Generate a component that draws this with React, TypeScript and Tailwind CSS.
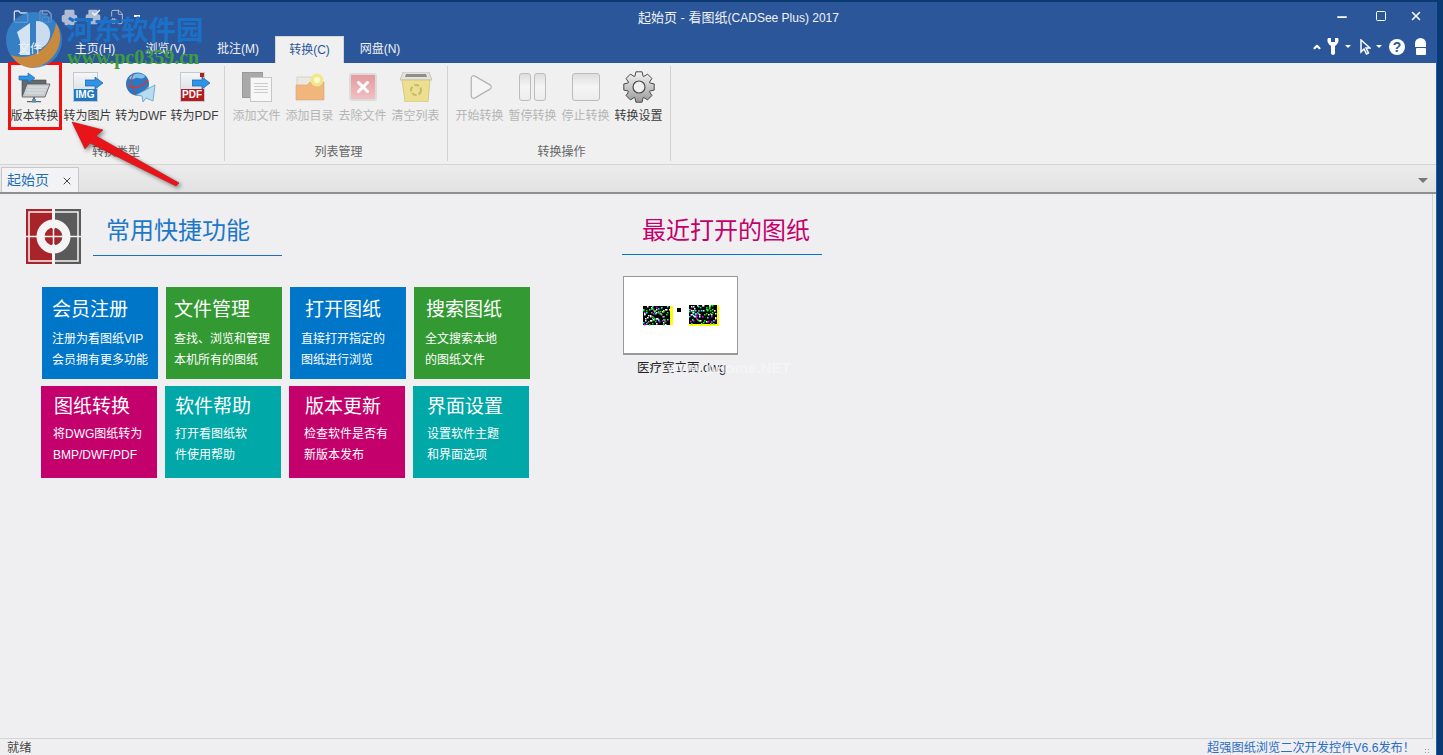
import { Folder, Save, Printer, FileCog, Check, ChevronUp, Minus, Square, X, Play } from 'lucide-react'

const cjk = "font-['Liberation_Sans','Noto_Sans_CJK_SC',sans-serif]"

function FolderIcon() {
  return (
    <svg viewBox="0 0 34 36" className="w-[34px] h-[36px]">
      <path d="M4 27V9h9l2 2h13v14z" fill="#646a6e" stroke="#444" strokeWidth="0.6" />
      <path d="M4 28 9 15h23l-5 13z" fill="#c6ccd0" stroke="#555" strokeWidth="0.8" />
      <path d="M10 18h20M9 21h19M8 24h18" stroke="#e8ecee" strokeWidth="0.8" />
      <path d="M1 7h9V4l7 5-7 5v-3H1z" fill="#2f93e6" stroke="#1b5fa8" strokeWidth="0.6" />
      <path d="M15 28h2v3h-2zM9 32h14v1.200H9z" fill="#666" />
      <rect x="14" y="30" width="4" height="3.500" fill="#5c8fb0" />
    </svg>
  )
}

function DocArrowIcon({ label, color, fold }: { label: string; color: string; fold?: boolean }) {
  return (
    <div className="relative w-[30px] h-[30px]">
      <div className="w-[25px] h-[30px] flex flex-col justify-end bg-gradient-to-b from-[#f4f6f8] to-[#cfd6dc] border border-[#c5c9cc]">
        <div className={`h-[12px] ${color} text-white text-[10px] leading-[12px] font-bold text-center font-['Liberation_Sans',sans-serif]`}>
          {label}
        </div>
      </div>
      {fold && <div className="absolute top-[1px] left-[20px] w-[4px] h-[4px] bg-[#b31d20]" />}
      <svg viewBox="0 0 18 12" className="absolute top-[5px] left-[12px] w-[18px] h-[12px]">
        <path d="M0 3h10V0l8 6-8 6V9H0z" fill="#2f93e6" stroke="#1b5fa8" strokeWidth="0.7" />
      </svg>
    </div>
  )
}

function GlobeIcon() {
  return (
    <svg viewBox="0 0 30 30" className="w-[30px] h-[30px]">
      <circle cx="11.500" cy="12" r="11.500" fill="#2a78c4" />
      <path d="M3 6c4-5 12-6 16-2-1 3-4 3-7 2S6 10 3 6z" fill="#7fc0ea" />
      <path d="M1 13c6 4 14 3 21-5" stroke="#d8392b" strokeWidth="1.300" fill="none" />
      <path d="M7 3c-3 6-2 14 4 20" stroke="#d8392b" strokeWidth="1" fill="none" />
      <path d="M14 21c3-2 6-3 8-7-1 5-4 8-8 9z" fill="#e0a63a" />
      <path d="M29 13 10 23l6 1 1 6 3-4 7 3z" fill="#b7dcf2" stroke="#4f93c4" strokeWidth="0.7" />
    </svg>
  )
}

function CopyIcon() {
  return (
    <div className="relative w-[30px] h-[30px]">
      <div className="absolute top-0 left-0 w-[21px] h-[26px] bg-[#a9a9a9] border border-[#999]" />
      <div className="absolute top-[5px] left-[8px] w-[22px] h-[25px] bg-[#f7f7f7] border border-[#c6c6c6] flex flex-col gap-[2px] px-[3px] pt-[5px]">
        <div className="h-px bg-[#ccc]" />
        <div className="h-px bg-[#ccc]" />
        <div className="h-px bg-[#ccc]" />
        <div className="h-px bg-[#ccc]" />
      </div>
    </div>
  )
}

function NewFolderIcon() {
  return (
    <svg viewBox="0 0 30 28" className="w-[30px] h-[28px]">
      <path d="M2 4h17v10H2z" fill="#ece8df" stroke="#c8c2b8" strokeWidth="0.6" />
      <path d="M1 12h11l3-3h14v18H1z" fill="#f2b67c" stroke="#c9a783" strokeWidth="0.6" />
      <circle cx="22" cy="7" r="6.500" fill="#f0e98c" />
      <circle cx="22" cy="7" r="3" fill="#fbf8d4" />
    </svg>
  )
}

function DeleteIcon() {
  return (
    <div className="w-[28px] h-[28px] rounded-[3px] border-2 border-[#dcdcdc] bg-gradient-to-b from-[#e59a9f] to-[#efc0c3] flex items-center justify-center">
      <X size={18} strokeWidth={4} className="text-white" />
    </div>
  )
}

function RecycleIcon() {
  return (
    <svg viewBox="0 0 32 30" className="w-[32px] h-[30px]">
      <path d="M3 0h26l3 8H0z" fill="#e3e3dc" stroke="#b7b7b0" strokeWidth="0.7" />
      <path d="M6 2h20l1 3H5z" fill="#8f8f88" />
      <path d="M2 8h28l-2 22H5z" fill="#ecdf90" stroke="#c8bd78" strokeWidth="0.7" />
      <circle cx="16" cy="18" r="5" fill="none" stroke="#c5b871" strokeWidth="2" strokeDasharray="5 2" />
    </svg>
  )
}

function GearIcon() {
  // eight teeth, computed once
  let d = ''
  for (let i = 0; i < 8; i++) {
    const a = (i * Math.PI) / 4
    const pts = [
      [11.500, a - 0.36],
      [15.500, a - 0.2],
      [15.500, a + 0.2],
      [11.500, a + 0.36],
    ]
    for (const [r, t] of pts) {
      d += `${d ? 'L' : 'M'}${(16 + r * Math.cos(t)).toFixed(2)} ${(16 + r * Math.sin(t)).toFixed(2)} `
    }
  }
  return (
    <svg viewBox="0 0 32 32" className="w-[32px] h-[32px]">
      <defs>
        <linearGradient id="gear" x1="0" y1="0" x2="0" y2="1">
          <stop offset="0" stopColor="#f4f4f4" />
          <stop offset="1" stopColor="#9a9a9a" />
        </linearGradient>
      </defs>
      <path d={d + 'Z'} fill="url(#gear)" stroke="#4a4a4a" strokeWidth="1" strokeLinejoin="round" />
      <circle cx="16" cy="16" r="6" fill="#f0f0f0" stroke="#4a4a4a" strokeWidth="1.200" />
    </svg>
  )
}

function GreyBox({ className }: { className: string }) {
  return <div className={`rounded-[3px] border border-[#bcbcbc] bg-gradient-to-b from-[#dedede] via-[#f5f5f5] to-[#ececec] ${className}`} />
}

function StartLogo() {
  return (
    <svg viewBox="0 0 55 55" className="w-[55px] h-[55px] shrink-0">
      <rect x="0" y="0" width="26" height="55" fill="#a9242a" />
      <rect x="29" y="0" width="26" height="55" fill="#5a5a5a" />
      <path d="M3 3h49v49H3z" fill="none" stroke="#f4f4f4" strokeWidth="1.500" />
      <path d="M0 27.500h55M27.500 0v55" stroke="#f4f4f4" strokeWidth="1.500" />
      <circle cx="27.500" cy="27.500" r="13" fill="none" stroke="#f4f4f4" strokeWidth="8" />
      <circle cx="27.500" cy="27.500" r="8" fill="#a9242a" />
      <path d="M27.500 19v17M19 27.500h17" stroke="#f4f4f4" strokeWidth="1.500" />
    </svg>
  )
}

function Thumbnail() {
  const specks: { x: number; y: number; c: string }[] = []
  const colors = ['#00ff00', '#ff00ff', '#ffffff', '#00ffff', '#ffffff', '#00ff00']
  let seed = 7
  for (let i = 0; i < 170; i++) {
    seed = (seed * 137 + 59) % 1009
    const right = i % 2 === 0
    specks.push({
      x: (right ? 46 : 0) + (seed % 27),
      y: ((seed * 3) % 19) + (right ? 0 : 1),
      c: colors[seed % colors.length],
    })
  }
  return (
    <svg viewBox="0 0 76 21" className="w-[76px] h-[21px]">
      <rect x="0" y="1" width="27" height="19" fill="#000" />
      <rect x="27" y="1" width="3" height="19" fill="#ff0" />
      <rect x="34" y="3" width="4" height="4" fill="#000" />
      <rect x="46" y="0" width="28" height="19" fill="#000" />
      <rect x="46" y="19" width="30" height="2" fill="#ff0" />
      <rect x="74" y="0" width="2" height="19" fill="#ff0" />
      {specks.map((s, i) => (
        <rect key={i} x={s.x} y={s.y} width="1.500" height="1.500" fill={s.c} />
      ))}
    </svg>
  )
}

function RibbonButton({ label, icon, disabled, w = 'w-[53px]' }: { label: string; icon: React.ReactNode; disabled?: boolean; w?: string }) {
  return (
    <div className={`${w} flex flex-col items-center`}>
      <div className="h-[36px] flex items-center justify-center">{icon}</div>
      <span className={`mt-[3px] text-[12px] leading-[16px] whitespace-nowrap ${disabled ? 'text-[#b5b5b5]' : 'text-[#3c3c3c]'}`}>{label}</span>
    </div>
  )
}

function RibbonGroup({ title, children, className }: { title: string; children: React.ReactNode; className: string }) {
  return (
    <div className={`flex flex-col h-[95px] border-r border-[#d2d2d2] ${className}`}>
      <div className="flex flex-1 pt-[3px]">{children}</div>
      <div className="text-center text-[12px] leading-[16px] text-[#666] pb-[1px]">{title}</div>
    </div>
  )
}

type TileProps = {
  title: string
  lines: string[]
  color: string
  titleX: string
  descX: string
  lower?: boolean
}

function Tile({ title, lines, color, titleX, descX, lower }: TileProps) {
  return (
    <div className={`w-[116px] h-[92px] text-white ${color}`}>
      <div className={`text-[19px] leading-[24px] ${lower ? 'mt-[9px]' : 'mt-[11px]'} ${titleX}`}>{title}</div>
      <div className={`${lower ? 'mt-[5px]' : 'mt-[7px]'} text-[12px] leading-[21px] whitespace-nowrap ${descX}`}>
        {lines.map(l => <div key={l}>{l}</div>)}
      </div>
    </div>
  )
}

const tabs = [
  { label: '主页(H)', w: 'w-[70px]' },
  { label: '浏览(V)', w: 'w-[71px]' },
  { label: '批注(M)', w: 'w-[74px]' },
]

export default function App() {
  return (
    <div className={`${cjk} relative w-[1443px] h-[755px] overflow-hidden bg-[#0b3a72]`}>
      <div className="w-[1437px] h-[753px] mt-[2px] flex flex-col bg-[#efeff2] border-r border-[#1e5cb0]">
        {/* title bar */}
        <div className="h-[61px] shrink-0 flex flex-col bg-[#2b579a] text-white">
          <div className="h-[34px] flex">
            <div className="w-[638px] shrink-0 flex items-start pl-[13px] pt-[7px] text-[#ccd6e6]">
              <Folder size={16} strokeWidth={2} />
              <Save size={15} strokeWidth={2} className="ml-[9px] text-[#8ea3c6]" />
              <Printer size={17} strokeWidth={2} className="ml-[8px] fill-[#aebcd4] text-[#aebcd4]" />
              <div className="relative ml-[7px] w-[16px] h-[16px]">
                <Printer size={16} strokeWidth={2} className="fill-[#aebcd4] text-[#aebcd4]" />
                <Check size={10} strokeWidth={4} className="absolute -top-[1px] right-[0px] text-[#e8eef6]" />
              </div>
              <FileCog size={16} strokeWidth={1.500} className="ml-[8px] text-[#aebcd4]" />
              <div className="ml-[9px] mt-[6px] w-[6px] h-[2px] bg-white" />
            </div>
            <div className="pt-[8px] text-[13px] leading-[16px] text-[#f2f2f2] whitespace-nowrap">
              起始页 - 看图纸<span className="text-[12px]">(CADSee Plus) 2017</span>
            </div>
            <div className="ml-auto flex items-start pt-[7px] pr-[13px]">
              <Minus size={14} strokeWidth={3} className="mt-[1px]" />
              <Square size={12} strokeWidth={2} className="ml-[26px] mt-[1px]" />
              <X size={14} strokeWidth={2.500} className="ml-[22px]" />
            </div>
          </div>
          <div className="h-[27px] flex items-end">
            <div className="relative z-10 w-[60px] h-[27px] text-center text-[12px] leading-[26px] text-[#f0f0f0]">文件</div>
            {tabs.map(t => (
              <div key={t.label} className={`${t.w} h-[27px] text-center text-[12px] leading-[26px] text-[#f0f0f0]`}>{t.label}</div>
            ))}
            <div className="w-[69px] h-[27px] bg-[#f0f0f0] text-center text-[12px] leading-[26px] text-[#2b579a] border-x border-t border-[#d5d5d5]">转换(C)</div>
            <div className="w-[72px] h-[27px] text-center text-[12px] leading-[26px] text-[#f0f0f0]">网盘(N)</div>
            <div className="ml-auto self-stretch flex items-center pr-[10px] pb-[6px]">
              <ChevronUp size={10} strokeWidth={5} />
              <svg viewBox="0 0 12 17" className="ml-[5px] w-[12px] h-[17px]">
                <path d="M1 0C0 2 0 5 4 8v7c0 1 1 2 2 2s2-1 2-2V8c4-3 4-6 3-8L8 0v4H4V0z" fill="#fff" />
              </svg>
              <div className="ml-[6px] border-x-[3px] border-t-[3px] border-x-transparent border-t-white" />
              <svg viewBox="0 0 11 16" className="ml-[9px] w-[11px] h-[16px]">
                <path d="M1 1v12l3-3 2.500 5 2-1-2.500-5h4z" fill="#2b579a" stroke="#fff" strokeWidth="1.500" />
              </svg>
              <div className="ml-[5px] border-x-[3px] border-t-[3px] border-x-transparent border-t-white" />
              <div className="ml-[7px] w-[16px] h-[16px] rounded-full bg-white text-[#2b579a] text-[14px] leading-[16px] font-bold text-center">?</div>
              <div className="ml-[10px] w-[11px] flex flex-col items-center">
                <div className="w-[11px] h-[9px] rounded-t-full bg-white" />
                <div className="w-[9px] h-[1px]" />
                <div className="w-[10px] h-[7px] bg-white rounded-[1px]" />
              </div>
            </div>
          </div>
        </div>

        {/* ribbon */}
        <div className="flex h-[102px] shrink-0 bg-[#f0f0f0] border-b border-[#d4d4d4] pl-[8px] pt-[3px]">
          <RibbonGroup title="转换类型" className="w-[217px]">
            <RibbonButton label="版本转换" icon={<FolderIcon />} />
            <RibbonButton label="转为图片" icon={<DocArrowIcon label="IMG" color="bg-[#1c78c2]" />} />
            <RibbonButton label="转为DWF" icon={<GlobeIcon />} w="w-[54px]" />
            <RibbonButton label="转为PDF" icon={<DocArrowIcon label="PDF" color="bg-[#b31d20]" fold />} />
          </RibbonGroup>
          <RibbonGroup title="列表管理" className="w-[223px] pl-[5px]">
            <RibbonButton label="添加文件" disabled icon={<CopyIcon />} />
            <RibbonButton label="添加目录" disabled icon={<NewFolderIcon />} />
            <RibbonButton label="去除文件" disabled icon={<DeleteIcon />} />
            <RibbonButton label="清空列表" disabled icon={<RecycleIcon />} />
          </RibbonGroup>
          <RibbonGroup title="转换操作" className="w-[223px] pl-[5px]">
            <RibbonButton label="开始转换" disabled icon={<Play size={30} strokeWidth={1} className="text-[#b4b4b4] fill-[#f4f4f4]" />} />
            <RibbonButton label="暂停转换" disabled icon={<div className="flex gap-[3px]"><GreyBox className="w-[12px] h-[28px]" /><GreyBox className="w-[12px] h-[28px]" /></div>} />
            <RibbonButton label="停止转换" disabled icon={<GreyBox className="w-[28px] h-[28px]" />} />
            <RibbonButton label="转换设置" icon={<GearIcon />} />
          </RibbonGroup>
        </div>

        {/* doc tabs */}
        <div className="h-[29px] shrink-0 flex items-end justify-between bg-gradient-to-b from-[#ececec] to-[#e2e2e2] border-b-2 border-[#8f8f8f] pl-[1px]">
          <div className="w-[78px] h-[25px] bg-[#f3f3f5] border border-b-0 border-[#c8c8c8] flex items-center pl-[5px] pr-[5px] pt-[1px] justify-between">
            <span className="text-[14px] text-[#1f6fb8]">起始页</span>
            <X size={12} strokeWidth={2} className="text-[#444]" />
          </div>
          <div className="mr-[8px] mb-[9px] border-x-[5px] border-t-[5px] border-x-transparent border-t-[#777]" />
        </div>

        {/* start page */}
        <div className="flex-1 flex mr-[3px] border-b border-r border-[#d4d4d4] pl-[26px] pt-[15px]">
          <div className="w-[596px]">
            <div className="flex">
              <StartLogo />
              <div className="ml-[12px] w-[189px] h-[47px] border-b border-[#1d70b8] text-[24px] leading-[44px] text-[#1d78c8] pl-[13px]">常用快捷功能</div>
            </div>
            <div className="ml-[16px] mt-[23px] flex gap-[8px]">
              <Tile title="会员注册" lines={['注册为看图纸VIP', '会员拥有更多功能']} color="bg-[#0076c9]" titleX="pl-[10px]" descX="pl-[10px]" />
              <Tile title="文件管理" lines={['查找、浏览和管理', '本机所有的图纸']} color="bg-[#339933]" titleX="pl-[8px]" descX="pl-[8px]" />
              <Tile title="打开图纸" lines={['直接打开指定的', '图纸进行浏览']} color="bg-[#0076c9]" titleX="pl-[15px]" descX="pl-[11px]" />
              <Tile title="搜索图纸" lines={['全文搜索本地', '的图纸文件']} color="bg-[#339933]" titleX="pl-[12px]" descX="pl-[11px]" />
            </div>
            <div className="ml-[15px] mt-[7px] flex gap-[8px]">
              <Tile lower title="图纸转换" lines={['将DWG图纸转为', 'BMP/DWF/PDF']} color="bg-[#c3006b]" titleX="pl-[13px]" descX="pl-[12px]" />
              <Tile lower title="软件帮助" lines={['打开看图纸软', '件使用帮助']} color="bg-[#00a8a8]" titleX="pl-[10px]" descX="pl-[10px]" />
              <Tile lower title="版本更新" lines={['检查软件是否有', '新版本发布']} color="bg-[#c3006b]" titleX="pl-[16px]" descX="pl-[15px]" />
              <Tile lower title="界面设置" lines={['设置软件主题', '和界面选项']} color="bg-[#00a8a8]" titleX="pl-[14px]" descX="pl-[14px]" />
            </div>
          </div>
          <div className="w-[200px]">
            <div className="h-[46px] border-b border-[#0076c9] text-[24px] leading-[43px] text-[#c3006b] pl-[20px]">最近打开的图纸</div>
            <div className="ml-[1px] mt-[21px] w-[115px] h-[79px] bg-white border border-[#999] border-b-2 flex items-center justify-center">
              <Thumbnail />
            </div>
            <div className="relative ml-[15px] mt-[5px] text-[12.500px] leading-[16px] text-[#222] whitespace-nowrap">
              医疗室立面.dwg
              <span className="absolute left-[30px] top-0 text-[15px] text-[#f6f6f8]/80 font-bold">www.pHome.NET</span>
            </div>
          </div>
        </div>

        {/* status bar */}
        <div className="h-[16px] shrink-0 flex justify-between text-[12.200px] leading-[19px] pl-[7px] pr-[21px] overflow-hidden">
          <span className="text-[#444]">就绪</span>
          <span className="text-[#2b6cc4]">超强图纸浏览二次开发控件V6.6发布！</span>
        </div>
      </div>

      {/* annotation + watermark */}
      <div className="absolute left-[8px] top-[62px] w-[54px] h-[68px] border-[3px] border-[#f01010]" />
      <svg viewBox="0 0 1443 755" className="absolute inset-0 w-[1443px] h-[755px] pointer-events-none drop-shadow-[2px_2px_2px_rgba(0,0,0,0.45)]">
        <path d="M72 122 L103 130 L96 136 L179 183 L176 186 L90 143 L85 149 Z" fill="#e8141a" stroke="#c01015" strokeWidth="0.6" />
      </svg>
      <svg viewBox="0 0 56 56" className="absolute left-[6px] top-[12px] w-[56px] h-[56px]">
        <circle cx="28" cy="28" r="28" fill="#3a8ad0" fillOpacity="0.8" />
        <path d="M50 11C60 26 52 52 26 56 16 55 9 50 5 43 24 50 46 38 50 11z" fill="#c98a3e" />
        <path d="M11 20 24 11v32l-10 0 0-14z" fill="#f0f4f8" fillOpacity="0.85" />
        <path d="M30 9c10 0 15 7 14 15-1 7-6 12-14 14z" fill="#f0f4f8" fillOpacity="0.8" />
      </svg>
      <div className="absolute left-[66px] top-[11px] text-[27.500px] leading-[34px] font-bold text-[#1b70c8] whitespace-nowrap font-['Noto_Sans_CJK_SC',serif]">河东软件园</div>
      <div className="absolute left-[67px] top-[47px] text-[20px] leading-[20px] font-bold text-[#3f9c3f] font-['Liberation_Serif',serif] whitespace-nowrap">www.pc0359.cn</div>
      <div className="absolute left-[1424px] top-[748px] w-[7px] h-[7px] bg-[radial-gradient(#9a9a9a_1px,transparent_1px)] bg-[length:3px_3px]" />
    </div>
  )
}
